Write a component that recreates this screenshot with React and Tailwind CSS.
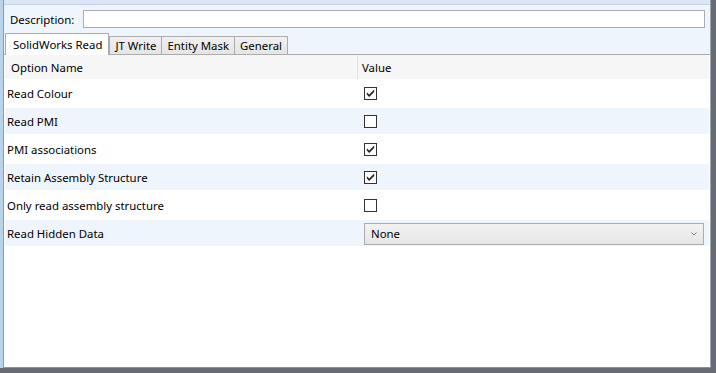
import React from 'react';

const font = { fontFamily: '"Noto Sans", "Segoe UI", Arial, sans-serif' };

const rows = [
  { name: 'Read Colour', type: 'check', value: true },
  { name: 'Read PMI', type: 'check', value: false },
  { name: 'PMI associations', type: 'check', value: true },
  { name: 'Retain Assembly Structure', type: 'check', value: true },
  { name: 'Only read assembly structure', type: 'check', value: false },
  { name: 'Read Hidden Data', type: 'combo', value: 'None' },
];

function CheckBox({ checked }) {
  return (
    <div className="w-[13px] h-[13px] border border-[#333333] bg-white flex items-center justify-center">
      {checked && (
        <svg width="9" height="9" viewBox="0 0 9 9">
          <path d="M0.8 3.2 L0.8 5.6 L3.2 8 L8.2 3 L8.2 0.6 L3.2 5.6 Z" fill="#262626" />
        </svg>
      )}
    </div>
  );
}

function Combo({ value }) {
  return (
    <div className="w-[340px] h-[22px] border border-[#acacac] bg-gradient-to-b from-[#f2f2f2] to-[#e6e6e6] flex items-center justify-between pl-[6px] pr-[6px]">
      <span className="pt-[1px]">{value}</span>
      <svg width="6" height="4" viewBox="0 0 6 4">
        <path d="M0.5 0.5 L3 3 L5.5 0.5" stroke="#7a7a7a" strokeWidth="1" fill="none" />
      </svg>
    </div>
  );
}

function Tab({ label, active }) {
  if (active) {
    return (
      <div className="h-[22px] pl-[7px] pr-[6px] flex items-center bg-white border-t border-l border-r border-[#acacac] text-black">
        {label}
      </div>
    );
  }
  return (
    <div className="h-[19px] px-[5px] flex items-center bg-gradient-to-b from-[#f0f0f0] to-[#e5e5e5] border border-[#acacac] -ml-px first:ml-0 text-black">
      {label}
    </div>
  );
}

export default function App() {
  return (
    <div className="w-[716px] h-[373px] bg-[#676c74] text-[11.4px] text-black" style={font}>
      <div className="w-[711px] h-[368px] flex">
        {/* left strip of the parent window */}
        <div className="w-[3px] bg-[#bad2ea]" />
        <div className="flex-1 flex flex-col border-l border-[#8e9aa7] border-r border-r-[#a0a6ad] border-b border-b-[#8c9096] bg-white">
          <div className="h-[5px] bg-[#dbe6f4] border-b border-[#c4d2e4]" />

          <div className="bg-[#eef5fd] pt-[5px]">
            <div className="flex items-center pl-[6px] pr-[5px] h-[18px]">
              <span className="w-[73px] pt-[1px]">Description:</span>
              <div className="flex-1 h-[18px] border border-[#abadb3] bg-white" />
            </div>
            <div className="flex items-end mt-[5px] h-[22px]">
              <div className="w-[1px] h-full border-b border-[#acacac]" />
              <Tab label="SolidWorks Read" active />
              <div className="flex items-end">
                <Tab label="JT Write" />
                <Tab label="Entity Mask" />
                <Tab label="General" />
              </div>
              <div className="flex-1 h-full border-b border-[#acacac]" />
            </div>
          </div>

          <div className="flex-1 bg-white px-[1px]">
            <div className="flex h-[24px] bg-[#f6f6f6] items-center">
              <div className="w-[353px] h-full pl-[6px] pt-[2px] flex items-center border-r border-[#e2e2e2]">Option Name</div>
              <div className="pl-[4px] pt-[2px]">Value</div>
            </div>
            <div className="mt-[1px]">
              {rows.map((r, i) => (
                <div
                  key={r.name}
                  className={`flex items-center h-[26px] mb-[2px] rounded-[2px] ${i % 2 === 1 ? 'bg-[#eef5fd]' : 'bg-white'}`}
                >
                  <div className="w-[354px] pl-[2px] pt-[2px]">{r.name}</div>
                  <div className="pl-[5px] pt-[1px]">
                    {r.type === 'check' ? <CheckBox checked={r.value} /> : <Combo value={r.value} />}
                  </div>
                </div>
              ))}
            </div>
          </div>
        </div>
      </div>
    </div>
  );
}
